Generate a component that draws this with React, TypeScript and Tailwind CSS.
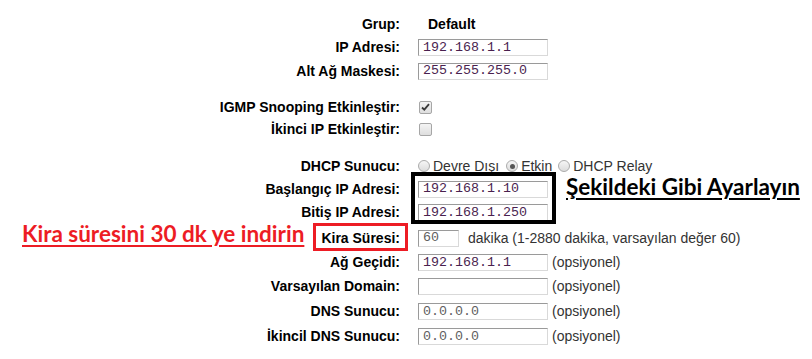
import React from "react";

const label = "font-['Liberation_Sans',Arial,sans-serif] text-[14px] font-bold text-black";
const mono = "font-['Liberation_Mono','Courier_New',monospace] text-[13.33px]";

function Field({ value, muted, w = "w-[130px]" }: { value: string; muted?: boolean; w?: string }) {
  return (
    <div
      className={`${w} h-[17px] flex items-center pl-[4px] border border-t-[#9a9a9a] border-l-[#9a9a9a] border-r-[#d9d9d9] border-b-[#d9d9d9] bg-white leading-none ${mono} ${
        muted ? "text-[#5e5e5e]" : "text-[#4a1f4f]"
      }`}
    >
      {value}
    </div>
  );
}

function Check({ checked }: { checked?: boolean }) {
  return (
    <span className="ml-[1px] w-[13px] h-[13px] rounded-[2px] border border-[#a6a6a6] bg-gradient-to-b from-[#f4f4f4] to-[#dedede] flex items-center justify-center">
      {checked && (
        <svg width="9" height="8" viewBox="0 0 9 8">
          <path d="M1 4.5 L3.3 6.7 L8 1.2" stroke="#3a3a3a" strokeWidth="1.8" fill="none" />
        </svg>
      )}
    </span>
  );
}

function Radio({ checked }: { checked?: boolean }) {
  return (
    <span className="w-[12px] h-[12px] rounded-full border border-[#ababab] bg-gradient-to-b from-[#f6f6f6] to-[#dcdcdc] flex items-center justify-center">
      {checked && <span className="w-[5px] h-[5px] rounded-full bg-[#555]" />}
    </span>
  );
}

function Row({ name, h, children }: { name: string; h: string; children?: React.ReactNode }) {
  return (
    <div className={`flex items-center ${h}`}>
      <div className={`w-[400px] text-right ${label}`}>{name}</div>
      <div className="ml-[18px] flex items-center font-['Liberation_Sans',Arial,sans-serif] text-[14px] text-[#333]">
        {children}
      </div>
    </div>
  );
}

const opt = <span className="ml-[4px]">(opsiyonel)</span>;

export default function App() {
  return (
    <div className="relative w-[812px] h-[359px] bg-white overflow-hidden">
      <div className="flex flex-col pt-[12px]">
        <Row name="Grup:" h="h-[24px]">
          <span className={`ml-[10px] ${label}`}>Default</span>
        </Row>
        <Row name="IP Adresi:" h="h-[23px]">
          <Field value="192.168.1.1" />
        </Row>
        <Row name="Alt Ağ Maskesi:" h="h-[24px]">
          <Field value="255.255.255.0" />
        </Row>
        <div className="h-[13px]" />
        <Row name="IGMP Snooping Etkinleştir:" h="h-[22px]">
          <Check checked />
        </Row>
        <Row name="İkinci IP Etkinleştir:" h="h-[22px]">
          <Check />
        </Row>
        <div className="h-[14px]" />
        <Row name="DHCP Sunucu:" h="h-[24px]">
          <Radio />
          <span className="ml-[3px]">Devre Dışı</span>
          <span className="ml-[7px]">
            <Radio checked />
          </span>
          <span className="ml-[3px]">Etkin</span>
          <span className="ml-[6px]">
            <Radio />
          </span>
          <span className="ml-[3px]">DHCP Relay</span>
        </Row>
        <Row name="Başlangıç IP Adresi:" h="h-[22px]">
          <Field value="192.168.1.10" />
        </Row>
        <Row name="Bitiş IP Adresi:" h="h-[25px]">
          <Field value="192.168.1.250" />
        </Row>
        <Row name="Kira Süresi:" h="h-[26px]">
          <Field value="60" muted w="w-[41px]" />
          <span className="ml-[9px]">dakika (1-2880 dakika, varsayılan değer 60)</span>
        </Row>
        <Row name="Ağ Geçidi:" h="h-[23px]">
          <Field value="192.168.1.1" />
          {opt}
        </Row>
        <Row name="Varsayılan Domain:" h="h-[25px]">
          <Field value="" />
          {opt}
        </Row>
        <Row name="DNS Sunucu:" h="h-[25px]">
          <Field value="0.0.0.0" muted />
          {opt}
        </Row>
        <Row name="İkincil DNS Sunucu:" h="h-[25px]">
          <Field value="0.0.0.0" muted />
          {opt}
        </Row>
      </div>

      {/* annotations drawn over the form */}
      <div className="absolute left-[411px] top-[172px] w-[145px] h-[52px] border-[4px] border-black" />
      <div className="absolute left-[313px] top-[223px] w-[95px] h-[28px] border-[3px] border-[#ed1c24]" />
      <div className="absolute left-[566px] top-[176px] font-['Lato',sans-serif] font-bold text-[22.5px] leading-none underline decoration-[2px] underline-offset-[3px] text-black">
        Şekildeki Gibi Ayarlayın
      </div>
      <div className="absolute left-[22px] top-[223px] font-['Lato',sans-serif] font-bold text-[22.5px] leading-none underline decoration-[2px] underline-offset-[3px] text-[#ed1c24]">
        Kira süresini 30 dk ye indirin
      </div>
    </div>
  );
}
